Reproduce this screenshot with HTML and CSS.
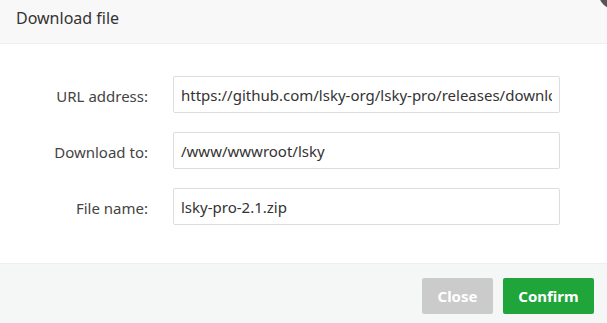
FILE: index.html
```html
<!DOCTYPE html>
<html lang="en">
<head>
    <meta charset="UTF-8">
    <meta name="viewport" content="width=device-width, initial-scale=1.0">
    <title>Download file</title>
    <link rel="stylesheet" href="styles.css">
</head>
<body>
    <div class="layer">
        <div class="layer-title">Download file</div>
        <span class="layer-close"></span>

        <form class="layer-content">
            <div class="form-row">
                <label for="url">URL address:</label>
                <input type="text" id="url" value="https://github.com/lsky-org/lsky-pro/releases/download/v2.1/lsky-pro-2.1.zip">
            </div>
            <div class="form-row">
                <label for="path">Download to:</label>
                <input type="text" id="path" value="/www/wwwroot/lsky">
            </div>
            <div class="form-row">
                <label for="filename">File name:</label>
                <input type="text" id="filename" value="lsky-pro-2.1.zip">
            </div>
        </form>

        <div class="layer-footer">
            <button type="button" class="btn btn-close">Close</button>
            <button type="button" class="btn btn-confirm">Confirm</button>
        </div>
    </div>
</body>
</html>
```

FILE: styles.css
```css
* {
    box-sizing: border-box;
    margin: 0;
    padding: 0;
    font-family: 'Noto Sans', 'Open Sans', sans-serif;
}

body {
    background-color: white;
    width: 607px;
    height: 323px;
    overflow: hidden;
}

.layer {
    position: relative;
    display: flex;
    flex-direction: column;
    height: 323px;
    background-color: white;
}

.layer-title {
    height: 44px;
    padding: 0 16px;
    line-height: 36px;
    font-size: 16px;
    color: #333;
    background-color: #f8f8f8;
    border-bottom: 1px solid #eee;
}

.layer-close {
    position: absolute;
    top: -21px;
    right: -22px;
    width: 30px;
    height: 30px;
    border-radius: 50%;
    background-color: #555;
}

.layer-content {
    flex: 1;
    padding-top: 32px;
}

.form-row {
    display: flex;
    align-items: center;
    height: 37px;
    margin-bottom: 19px;
}

.form-row label {
    width: 149px;
    padding: 3px 1px 0 0;
    margin-right: 24px;
    text-align: right;
    font-size: 15px;
    color: #444;
}

.form-row input {
    width: 387px;
    height: 37px;
    padding: 0 7px;
    border: 1px solid #ddd;
    border-radius: 2px;
    font-size: 15px;
    color: #333;
    outline: none;
}

.layer-footer {
    display: flex;
    justify-content: flex-end;
    gap: 10px;
    height: 60px;
    padding: 14px 13px 0 0;
    background-color: #f5f6f6;
    border-top: 1px solid #eee;
}

.btn {
    height: 36px;
    border: none;
    border-radius: 2px;
    font-size: 15px;
    font-weight: bold;
    color: white;
    cursor: pointer;
}

.btn-close {
    width: 71px;
    background-color: #cbcbcb;
}

.btn-confirm {
    width: 91px;
    background-color: #20a53a;
}
```
